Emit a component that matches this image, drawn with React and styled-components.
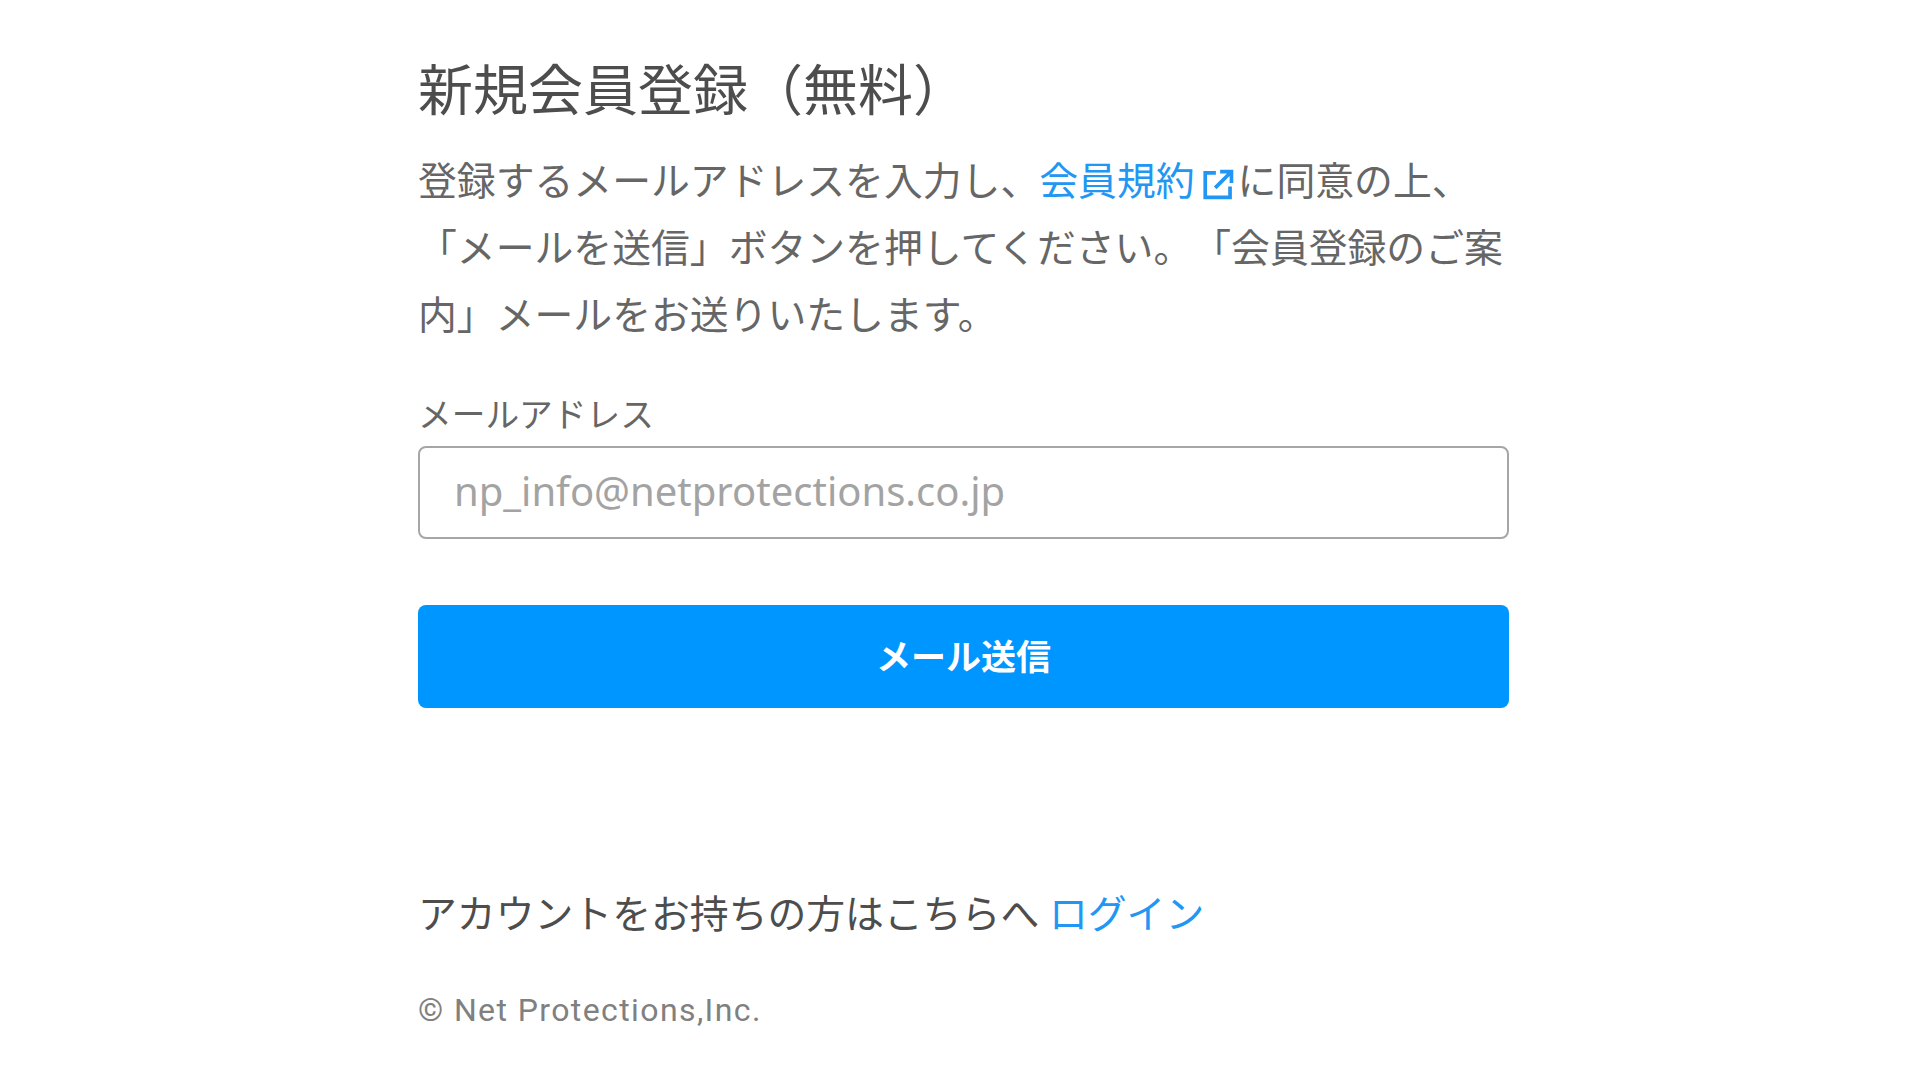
import styled, { createGlobalStyle } from 'styled-components';

const GlobalStyle = createGlobalStyle`
  html, body {
    margin: 0;
    background: #fff;
    overflow: hidden;
  }
  body {
    font-family: Roboto, "Noto Sans CJK JP", sans-serif;
    color: #666;
    text-spacing-trim: space-all;
  }
`;

const ExternalIcon = () => (
  <IconSvg viewBox="0 0 24 24" fill="none" stroke="currentColor" strokeWidth="2.6">
    <path d="M10.5 3.5H3v17.2h17.5V13" />
    <path d="M10 14 20.5 3.5M13.5 2.5h8v8" />
  </IconSvg>
);

const App = () => {
  return (
    <>
      <GlobalStyle />
      <Page>
        <Title>新規会員登録（無料）</Title>
        <Lead>
          登録するメールアドレスを入力し、
          <TextLink href="#">会員規約<ExternalIcon /></TextLink>
          に同意の上、「メールを送信」ボタンを押してください。「会員登録のご案内」メールをお送りいたします。
        </Lead>
        <Form onSubmit={(e) => e.preventDefault()}>
          <Label htmlFor="email">メールアドレス</Label>
          <Input id="email" type="email" placeholder="np_info@netprotections.co.jp" />
          <Submit type="submit">メール送信</Submit>
        </Form>
        <LoginRow>
          アカウントをお持ちの方はこちらへ <TextLink href="#">ログイン</TextLink>
        </LoginRow>
        <Copyright>© Net Protections,Inc.</Copyright>
      </Page>
    </>
  );
};

export default App;

const Page = styled.main`
  box-sizing: border-box;
  width: 1091px;
  margin-left: 418px;
  padding-top: 54px;
`;

const Title = styled.h1`
  margin: 0;
  font-size: 55px;
  font-weight: 400;
  line-height: 74px;
  color: #4d4d4d;
`;

const Lead = styled.p`
  margin: 20px 0 0;
  font-size: 38.85px;
  font-weight: 400;
  line-height: 67.2px;
  color: #666;
`;

const TextLink = styled.a`
  color: #2196f3;
  text-decoration: none;
`;

const IconSvg = styled.svg`
  display: inline-block;
  width: 34px;
  height: 34px;
  margin: 0 3px 0 6px;
  vertical-align: -7px;
`;

const Form = styled.form`
  display: flex;
  flex-direction: column;
  margin-top: 42px;
`;

const Label = styled.label`
  font-size: 33.7px;
  line-height: 48px;
  color: #666;
`;

const Input = styled.input`
  box-sizing: border-box;
  width: 100%;
  height: 93px;
  margin-top: 6px;
  padding: 0 34px 3px;
  border: 2px solid #a6a6a6;
  border-radius: 8px;
  background: #fff;
  font-family: "Noto Sans", "Noto Sans CJK JP", sans-serif;
  font-size: 40px;
  color: #666;
  outline: none;

  &::placeholder {
    color: #a3a3a3;
    opacity: 1;
  }
`;

const Submit = styled.button`
  height: 103px;
  margin-top: 66px;
  padding: 0 0 4px;
  border: none;
  border-radius: 8px;
  background: #0096ff;
  color: #fff;
  font-family: inherit;
  font-size: 35px;
  font-weight: 700;
  cursor: pointer;
`;

const LoginRow = styled.p`
  margin: 179px 0 0;
  font-size: 38.85px;
  line-height: 56px;
  color: #4d4d4d;
`;

const Copyright = styled.p`
  margin: 47px 0 0;
  font-size: 32px;
  line-height: 40px;
  letter-spacing: 1.4px;
  color: #808080;
`;
